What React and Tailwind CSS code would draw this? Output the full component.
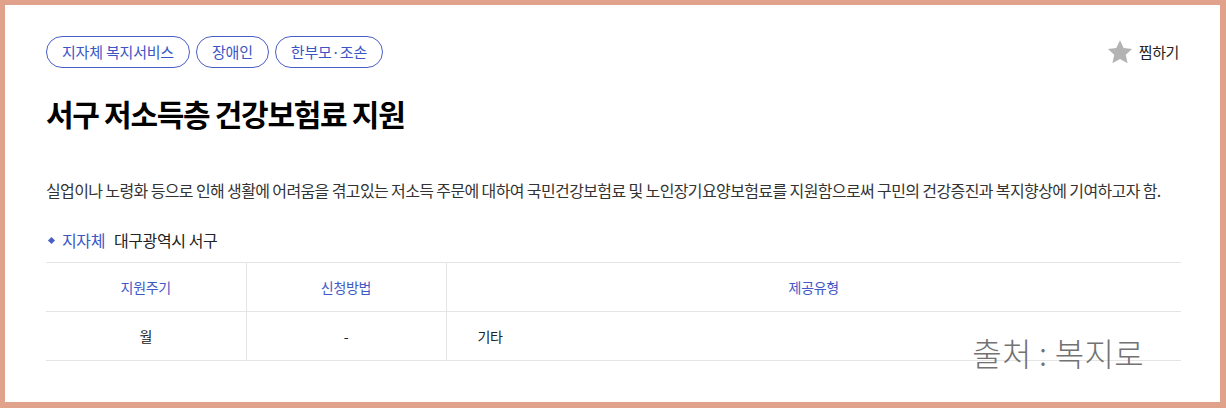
const tags = ["지자체 복지서비스", "장애인", "한부모·조손"];

const Star = () => (
  <svg width="26" height="26" viewBox="1 1.2 22 21">
    <path
      d="M12 1.8l3.1 6.6 7.1.8-5.3 4.9 1.5 7.1L12 17.6l-6.4 3.6 1.5-7.1-5.3-4.9 7.1-.8z"
      fill="#b3b3b3"
    />
  </svg>
);

const App = () => {
  return (
    <div
      className="w-[1226px] h-[408px] bg-[#e0a28a] pt-[5px] pl-[5px] pr-[6px] pb-[6px]"
      style={{ fontFamily: '"Noto Sans CJK KR", "Noto Sans", sans-serif' }}
    >
      <div className="relative h-full bg-white pl-[41px] pr-[39px] pt-[31px]">
        <div className="flex items-start justify-between">
          <div className="flex gap-[6px]">
            {tags.map((tag) => (
              <span
                key={tag}
                className="h-[32px] px-[15px] flex items-center rounded-full border border-[#4a5fc6] text-[#3b55c4] text-[15px] tracking-[-0.2px]"
              >
                {tag}
              </span>
            ))}
          </div>
          <div className="flex items-center gap-[6px] mt-[3px] mr-[2px]">
            <Star />
            <span className="text-[15px] text-[#222] tracking-[-0.4px]">찜하기</span>
          </div>
        </div>

        <h1 className="mt-[25px] text-[30px] font-bold text-black tracking-[-1.3px] leading-[40px]">
          서구 저소득층 건강보험료 지원
        </h1>

        <p className="mt-[45px] text-[16px] text-[#333] tracking-[-0.62px] leading-[24px]">
          실업이나 노령화 등으로 인해 생활에 어려움을 겪고있는 저소득 주문에 대하여 국민건강보험료 및 노인장기요양보험료를 지원함으로써 구민의 건강증진과 복지향상에 기여하고자 함.
        </p>

        <div className="mt-[26px] flex items-center text-[16px] tracking-[-0.4px] leading-[24px]">
          <span className="ml-[3px] w-[5px] h-[5px] rotate-45 bg-[#4a5fc6]" />
          <span className="ml-[8px] text-[#3b55c4]">지자체</span>
          <span className="ml-[9px] text-[#222]">대구광역시 서구</span>
        </div>

        <table className="mt-[10px] w-full border-collapse text-[14px] tracking-[-0.3px]">
          <thead>
            <tr className="border-t border-b border-[#e5e5e5] h-[49px]">
              <th className="w-[200px] font-normal text-[#3f5ac6] border-r border-[#e5e5e5]">지원주기</th>
              <th className="w-[200px] font-normal text-[#3f5ac6] border-r border-[#e5e5e5]">신청방법</th>
              <th className="font-normal text-[#3f5ac6]">제공유형</th>
            </tr>
          </thead>
          <tbody>
            <tr className="border-b border-[#e5e5e5] h-[49px] text-[#222]">
              <td className="text-center border-r border-[#e5e5e5]">월</td>
              <td className="text-center border-r border-[#e5e5e5]">-</td>
              <td className="pl-[31px]">기타</td>
            </tr>
          </tbody>
        </table>

        <div className="absolute right-[76px] bottom-[34px] text-[32px] font-light text-[#727272] tracking-[0.3px] leading-none">
          출처 : 복지로
        </div>
      </div>
    </div>
  );
};

export default App;
